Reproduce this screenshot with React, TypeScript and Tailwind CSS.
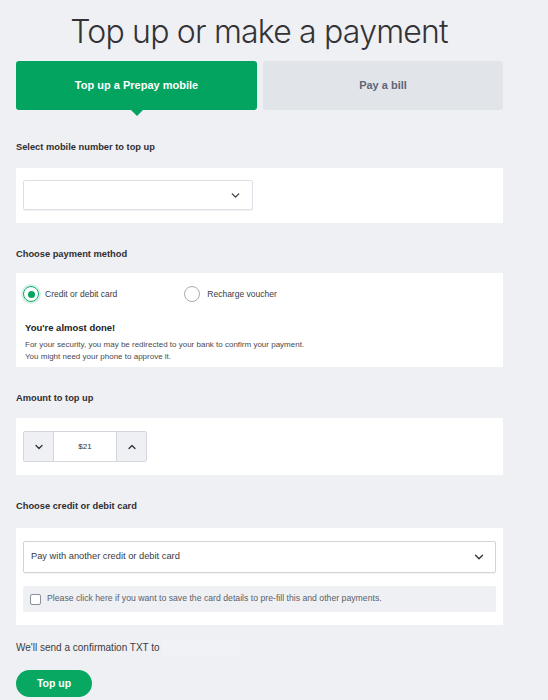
import { ChevronDown, ChevronUp } from "lucide-react";

const font = { fontFamily: '"Liberation Sans", Arial, sans-serif' };

function Label({ children, className }: { children: string; className?: string }) {
  return (
    <div className={"h-[12px] text-[9.3px] font-bold leading-[12px] text-[#2e2e33] " + (className ?? "")}>
      {children}
    </div>
  );
}

export default function App() {
  return (
    <div className="min-h-[700px] w-[548px] bg-[#eff0f4] px-4" style={font}>
      <h1
        className="pt-[12px] pr-[30px] text-center text-[32px] font-light leading-[40px] tracking-[-0.8px] text-[#333336]"
        style={{ fontFamily: 'Inter, "Liberation Sans", sans-serif' }}
      >
        Top up or make a payment
      </h1>

      <div className="mt-[9px] flex w-[487px] gap-[6px]">
        <div className="relative flex h-[49px] w-[241px] items-center justify-center rounded-[3px] bg-[#03a45f] text-[11px] font-bold text-white">
          Top up a Prepay mobile
          <span className="absolute -bottom-[6px] left-1/2 h-0 w-0 -translate-x-1/2 border-x-[6px] border-t-[6px] border-x-transparent border-t-[#03a45f]" />
        </div>
        <div className="flex h-[49px] w-[240px] items-center justify-center rounded-[3px] bg-[#e1e4e9] text-[11px] font-bold text-[#5f6679]">
          Pay a bill
        </div>
      </div>

      <Label className="mt-[31px]">Select mobile number to top up</Label>
      <div className="mt-[15px] h-[55px] w-[487px] bg-white px-[7px] pt-[12px]">
        <div className="flex h-[30px] w-[230px] items-center justify-end rounded-[2px] border border-[#dcdfe5] pr-[10px] shadow-[0_1px_1px_rgba(0,0,0,0.06)]">
          <ChevronDown size={13} strokeWidth={2.4} className="text-[#3a3a3f]" />
        </div>
      </div>

      <Label className="mt-[25px]">Choose payment method</Label>
      <div className="mt-[13px] h-[94px] w-[487px] bg-white px-[7px] pt-[13px]">
        <div className="flex h-[16px] items-center text-[8.5px] text-[#3c3c40]">
          <span className="flex h-[16px] w-[16px] items-center justify-center rounded-full border-[1.5px] border-[#0aa866] shadow-[0_0_0_2px_#d9f1e5]">
            <span className="h-[7px] w-[7px] rounded-full bg-[#03a45f]" />
          </span>
          <span className="ml-[6px]">Credit or debit card</span>
          <span className="ml-[67px] h-[16px] w-[16px] rounded-full border border-[#a6abb5]" />
          <span className="ml-[7px]">Recharge voucher</span>
        </div>
        <div className="mt-[20px] pl-[2px] text-[9.5px] font-bold leading-[12px] text-[#222]">You&apos;re almost done!</div>
        <div className="mt-[5px] pl-[2px] text-[8px] leading-[12px] text-[#4a4a4f]">
          For your security, you may be redirected to your bank to confirm your payment.
          <br />
          You might need your phone to approve it.
        </div>
      </div>

      <Label className="mt-[25px]">Amount to top up</Label>
      <div className="mt-[14px] h-[57px] w-[487px] bg-white px-[7px] pt-[13px]">
        <div className="flex h-[31px] w-[124px] overflow-hidden rounded-[2px] border border-[#d3d6dc]">
          <div className="flex w-[30px] items-center justify-center border-r border-[#d3d6dc] bg-[#eef0f3]">
            <ChevronDown size={12} strokeWidth={2.6} className="text-[#333]" />
          </div>
          <div className="flex flex-1 items-center justify-center text-[8px] text-[#333]">$21</div>
          <div className="flex w-[30px] items-center justify-center border-l border-[#d3d6dc] bg-[#eef0f3]">
            <ChevronUp size={12} strokeWidth={2.6} className="text-[#333]" />
          </div>
        </div>
      </div>

      <Label className="mt-[25px]">Choose credit or debit card</Label>
      <div className="mt-[16px] h-[97px] w-[487px] bg-white px-[7px] pt-[13px]">
        <div className="flex h-[32px] items-center justify-between rounded-[2px] border border-[#cfd3da] pl-[7px] pr-[9px] text-[9.3px] text-[#3a3a3f] shadow-[0_1px_1px_rgba(0,0,0,0.05)]">
          <span>Pay with another credit or debit card</span>
          <ChevronDown size={14} strokeWidth={2.4} className="text-[#333]" />
        </div>
        <div className="mt-[13px] flex h-[26px] items-center rounded-[2px] bg-[#eff0f4] pl-[7px] text-[8.7px] text-[#5b5f6a]">
          <span className="h-[11px] w-[11px] rounded-[2px] border border-[#8a8f9b] bg-white" />
          <span className="ml-[6px]">Please click here if you want to save the card details to pre-fill this and other payments.</span>
        </div>
      </div>

      <div className="mt-[14px] flex h-[16px] items-center text-[10px] text-[#3c3c40]">
        We&apos;ll send a confirmation TXT to
        <span className="ml-[2px] h-[16px] w-[78px] bg-[#f1f2f5]" />
      </div>

      <button className="mt-[15px] flex h-[27px] w-[76px] items-center justify-center rounded-full bg-[#08a862] text-[10.5px] font-bold text-white">
        Top up
      </button>
    </div>
  );
}
